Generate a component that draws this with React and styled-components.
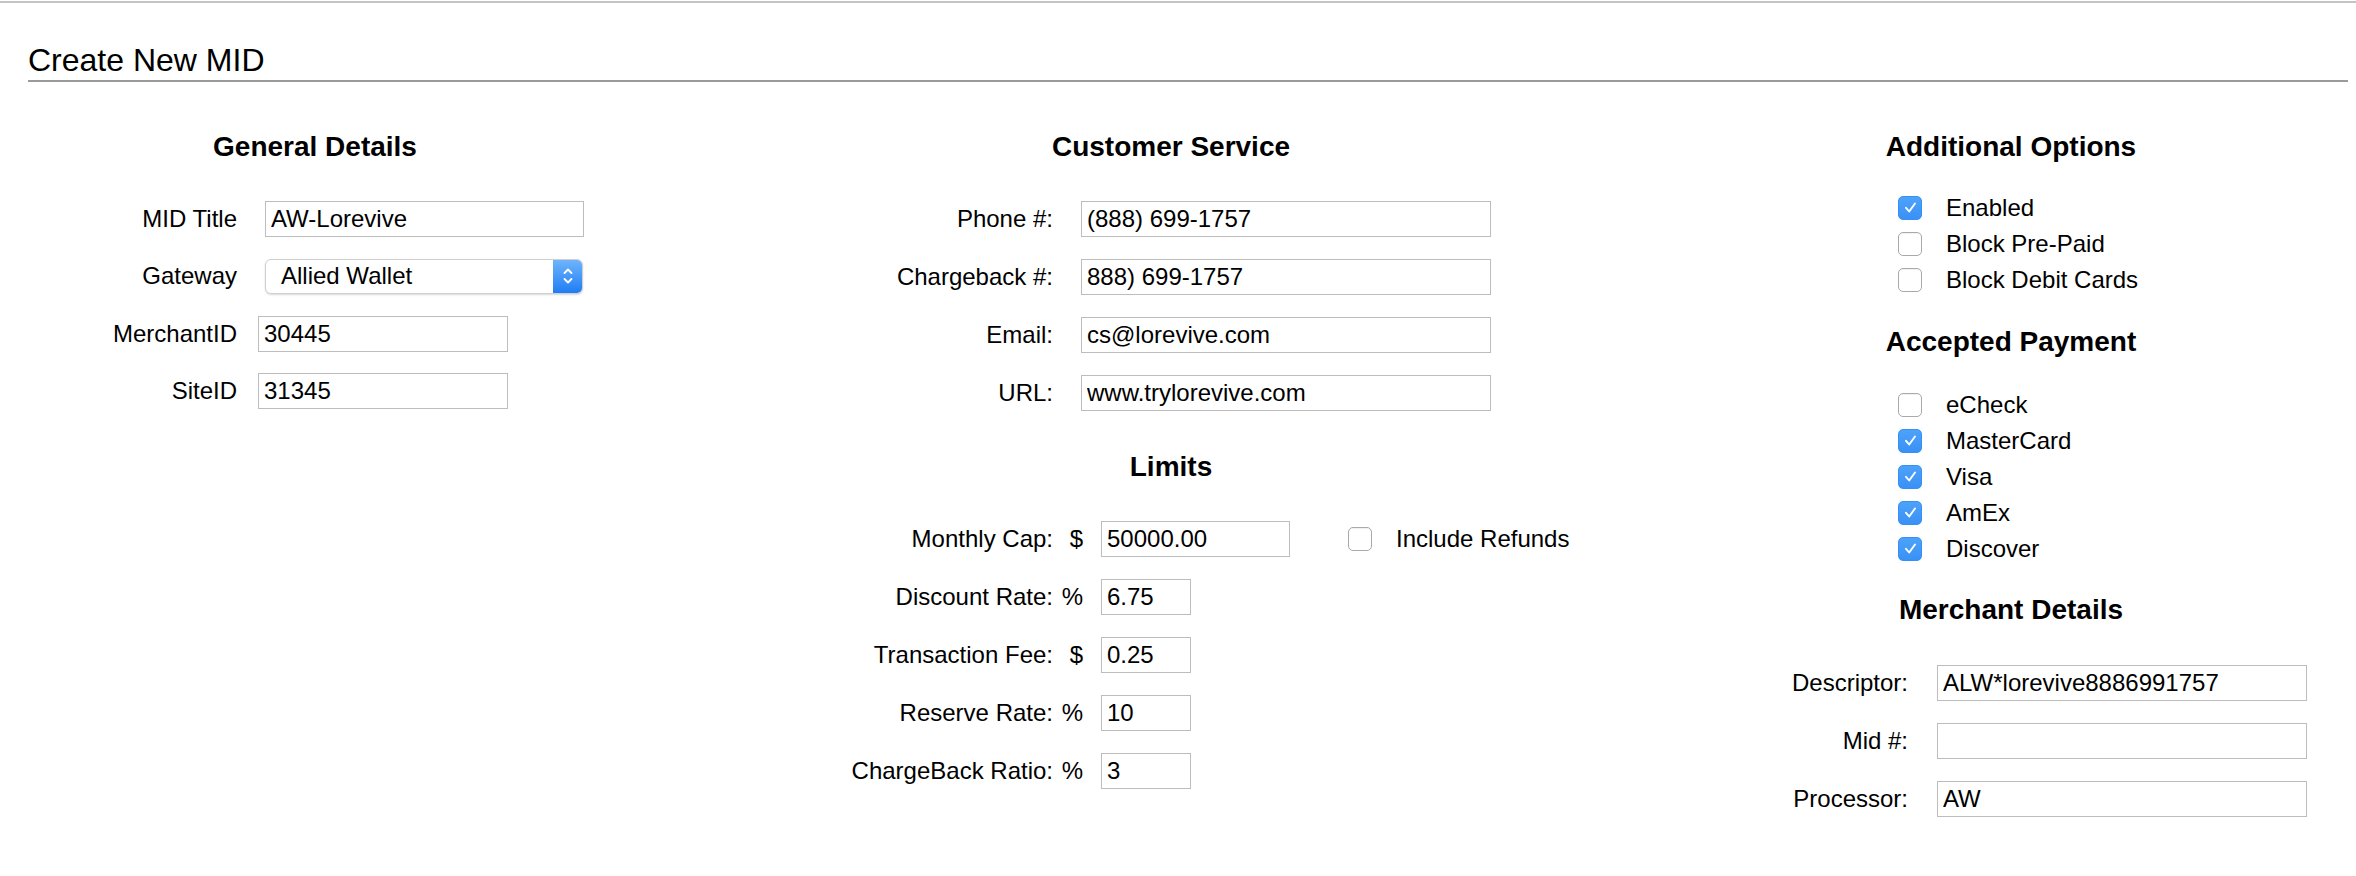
import React from 'react'
import styled, { createGlobalStyle } from 'styled-components'

const GlobalStyle = createGlobalStyle`
  body {
    margin: 0;
    background: #fff;
    color: #000;
    font-family: 'Liberation Sans', Arial, Helvetica, sans-serif;
  }
`

const TopRule = styled.div`
  margin-top: 1px;
  height: 2px;
  background: #c4c4c4;
`

const Page = styled.div`
  margin: 0 8px 0 28px;
`

const Title = styled.h1`
  margin: 39px 0 0;
  padding-bottom: 2px;
  border-bottom: 2px solid #9a9a9a;
  font-size: 32px;
  line-height: 36px;
  font-weight: normal;
`

const Columns = styled.div`
  display: grid;
  grid-template-columns: 574px 1138px 542px;
  margin-top: 49px;
`

const Column = styled.section`
  display: flex;
  flex-direction: column;
`

const Heading = styled.h2`
  margin: ${p => p.$top || 0}px 0 ${p => p.$bottom}px;
  font-size: 28px;
  line-height: 32px;
  font-weight: bold;
  text-align: center;
  white-space: nowrap;
`

const Fields = styled.div`
  display: flex;
  flex-direction: column;
  gap: ${p => p.$gap}px;
`

const Row = styled.div`
  display: flex;
  align-items: center;
  height: 36px;
`

const Label = styled.label`
  flex: 0 0 ${p => p.$w}px;
  text-align: right;
  font-size: 24px;
  white-space: nowrap;
`

const Unit = styled.span`
  flex: 0 0 30px;
  text-align: right;
  font-size: 24px;
`

const Input = styled.input`
  box-sizing: border-box;
  flex: 0 0 ${p => p.$w}px;
  width: ${p => p.$w}px;
  height: 36px;
  margin: 0 0 0 ${p => p.$gap}px;
  padding: 0 5px;
  border: 1px solid #bdbdbd;
  border-radius: 0;
  background: #fff;
  color: #000;
  font: 24px 'Liberation Sans', Arial, sans-serif;
  outline: none;
`

const Select = styled.div`
  box-sizing: border-box;
  display: flex;
  align-items: center;
  flex: 0 0 318px;
  height: 35px;
  margin-left: 28px;
  border: 1px solid #d0d0d0;
  border-radius: 6px;
  box-shadow: 0 1px 2px rgba(0, 0, 0, 0.15);
  background: #fff;
  overflow: hidden;
`

const SelectText = styled.span`
  flex: 1;
  padding-left: 15px;
  font-size: 24px;
`

const SelectArrows = styled.span`
  display: flex;
  align-items: center;
  justify-content: center;
  width: 29px;
  align-self: stretch;
  background: linear-gradient(#6fb4fb, #1f7df4);
`

const Box = styled.span`
  box-sizing: border-box;
  display: flex;
  align-items: center;
  justify-content: center;
  flex: 0 0 24px;
  width: 24px;
  height: 24px;
  margin-left: ${p => p.$offset || 0}px;
  border-radius: 5px;
  border: 1px solid ${p => (p.$checked ? '#3690f5' : '#a9a9a9')};
  background: ${p => (p.$checked ? 'linear-gradient(#4da2fa, #3991f6)' : '#fff')};
  box-shadow: ${p => (p.$checked ? 'none' : 'inset 0 1px 1px rgba(0,0,0,0.06)')};
`

const CheckList = styled.div`
  display: flex;
  flex-direction: column;
  padding-left: 158px;
`

const CheckRow = styled.label`
  display: flex;
  align-items: center;
  gap: 24px;
  height: 36px;
  font-size: 24px;
  white-space: nowrap;
`

const CheckText = styled.span`
  margin-left: 24px;
  font-size: 24px;
  white-space: nowrap;
`

const Checkbox = ({ checked, offset }) => (
  <Box $checked={checked} $offset={offset}>
    {checked && (
      <svg width="15" height="15" viewBox="0 0 15 15">
        <path d="M3 7.8 L6.2 11.5 L12 3.5" fill="none" stroke="#fff" strokeWidth="1.9" strokeLinecap="round" strokeLinejoin="round" />
      </svg>
    )}
  </Box>
)

const options = [
  ['Enabled', true],
  ['Block Pre-Paid', false],
  ['Block Debit Cards', false],
]

const payments = [
  ['eCheck', false],
  ['MasterCard', true],
  ['Visa', true],
  ['AmEx', true],
  ['Discover', true],
]

const service = [
  ['Phone #:', '(888) 699-1757'],
  ['Chargeback #:', '888) 699-1757'],
  ['Email:', 'cs@lorevive.com'],
  ['URL:', 'www.trylorevive.com'],
]

const limits = [
  ['Discount Rate:', '%', '6.75'],
  ['Transaction Fee:', '$', '0.25'],
  ['Reserve Rate:', '%', '10'],
  ['ChargeBack Ratio:', '%', '3'],
]

const merchant = [
  ['Descriptor:', 'ALW*lorevive8886991757'],
  ['Mid #:', ''],
  ['Processor:', 'AW'],
]

const App = () => {
  return (
    <>
      <GlobalStyle />
      <TopRule />
      <Page>
        <Title>Create New MID</Title>
        <Columns>
          <Column>
            <Heading $bottom={38}>General Details</Heading>
            <Fields $gap={21.3}>
              <Row>
                <Label $w={209}>MID Title</Label>
                <Input $w={319} $gap={28} defaultValue="AW-Lorevive" />
              </Row>
              <Row>
                <Label $w={209}>Gateway</Label>
                <Select>
                  <SelectText>Allied Wallet</SelectText>
                  <SelectArrows>
                    <svg width="12" height="22" viewBox="0 0 12 22">
                      <path d="M2.5 8 L6 4.5 L9.5 8" fill="none" stroke="#fff" strokeWidth="1.8" strokeLinecap="round" strokeLinejoin="round" />
                      <path d="M2.5 14 L6 17.5 L9.5 14" fill="none" stroke="#fff" strokeWidth="1.8" strokeLinecap="round" strokeLinejoin="round" />
                    </svg>
                  </SelectArrows>
                </Select>
              </Row>
              <Row>
                <Label $w={209}>MerchantID</Label>
                <Input $w={250} $gap={21} defaultValue="30445" />
              </Row>
              <Row>
                <Label $w={209}>SiteID</Label>
                <Input $w={250} $gap={21} defaultValue="31345" />
              </Row>
            </Fields>
          </Column>

          <Column>
            <Heading $bottom={38}>Customer Service</Heading>
            <Fields $gap={22}>
              {service.map(([label, value]) => (
                <Row key={label}>
                  <Label $w={451}>{label}</Label>
                  <Input $w={410} $gap={28} defaultValue={value} />
                </Row>
              ))}
            </Fields>
            <Heading $top={40.4} $bottom={37.6}>Limits</Heading>
            <Fields $gap={22}>
              <Row>
                <Label $w={451}>Monthly Cap:</Label>
                <Unit>$</Unit>
                <Input $w={189} $gap={18} defaultValue="50000.00" />
                <Checkbox offset={58} />
                <CheckText>Include Refunds</CheckText>
              </Row>
              {limits.map(([label, unit, value]) => (
                <Row key={label}>
                  <Label $w={451}>{label}</Label>
                  <Unit>{unit}</Unit>
                  <Input $w={90} $gap={18} defaultValue={value} />
                </Row>
              ))}
            </Fields>
          </Column>

          <Column>
            <Heading $bottom={26.5}>Additional Options</Heading>
            <CheckList>
              {options.map(([label, on]) => (
                <CheckRow key={label}>
                  <Checkbox checked={on} />
                  {label}
                </CheckRow>
              ))}
            </CheckList>
            <Heading $top={28.5} $bottom={28.5}>Accepted Payment</Heading>
            <CheckList>
              {payments.map(([label, on]) => (
                <CheckRow key={label}>
                  <Checkbox checked={on} />
                  {label}
                </CheckRow>
              ))}
            </CheckList>
            <Heading $top={27.5} $bottom={39}>Merchant Details</Heading>
            <Fields $gap={22}>
              {merchant.map(([label, value]) => (
                <Row key={label}>
                  <Label $w={168}>{label}</Label>
                  <Input $w={370} $gap={29} defaultValue={value} />
                </Row>
              ))}
            </Fields>
          </Column>
        </Columns>
      </Page>
    </>
  )
}

export default App
